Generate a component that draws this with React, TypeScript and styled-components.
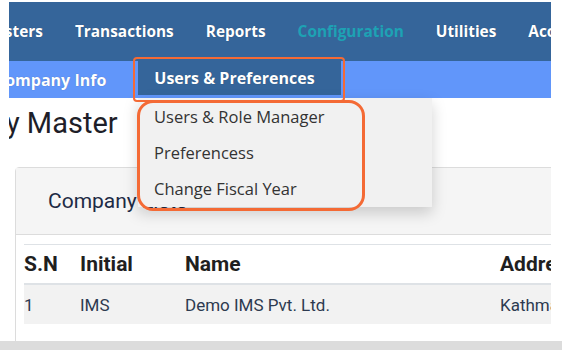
import styled, { createGlobalStyle } from 'styled-components';

const GlobalStyle = createGlobalStyle`
  html, body {
    margin: 0;
    padding: 0;
    background: #fff;
  }
  * {
    box-sizing: border-box;
  }
`;

const topMenu = ['Masters', 'Transactions', 'Reports', 'Configuration', 'Utilities', 'Accounts'];
const dropdownItems = ['Users & Role Manager', 'Preferencess', 'Change Fiscal Year'];

const rows = [{ sn: '1', initial: 'IMS', name: 'Demo IMS Pvt. Ltd.', address: 'Kathmandu' }];

export default function App() {
  return (
    <Frame>
      <GlobalStyle />
      <Shot>
        <TopNav>
          <TopList>
            {topMenu.map((item) => (
              <TopItem key={item} $active={item === 'Configuration'}>
                {item}
              </TopItem>
            ))}
          </TopList>
        </TopNav>
        <SubNav>
          <SubItem>Company Info</SubItem>
          <SubItem $active>Users &amp; Preferences</SubItem>
        </SubNav>

        <Content>
          <Title>Company Master</Title>
          <Card>
            <CardHeader>Company Lists</CardHeader>
            <CardBody>
              <Table>
                <HeadRow>
                  <HeadCell>S.N</HeadCell>
                  <HeadCell>Initial</HeadCell>
                  <HeadCell>Name</HeadCell>
                  <HeadCell>Address</HeadCell>
                </HeadRow>
                {rows.map((row) => (
                  <BodyRow key={row.sn}>
                    <Cell>{row.sn}</Cell>
                    <Cell>{row.initial}</Cell>
                    <Cell>{row.name}</Cell>
                    <Cell>{row.address}</Cell>
                  </BodyRow>
                ))}
              </Table>
            </CardBody>
          </Card>
        </Content>

        <Dropdown>
          {dropdownItems.map((item) => (
            <DropdownItem key={item}>{item}</DropdownItem>
          ))}
        </Dropdown>

        {/* annotation outlines drawn over the screenshot */}
        <TabOutline />
        <MenuOutline />
      </Shot>
      <BottomBar />
    </Frame>
  );
}

const Frame = styled.div`
  width: 562px;
  height: 350px;
  background: #fff;
  display: flex;
  flex-direction: column;
  overflow: hidden;
`;

const Shot = styled.div`
  position: relative;
  height: 339px;
  margin: 2px 11px 0 9px;
  overflow: hidden;
  background: #fff;
`;

const BottomBar = styled.div`
  height: 9px;
  background: #dcdcdc;
`;

const TopNav = styled.nav`
  height: 59px;
  background: #35659a;
  display: flex;
  align-items: center;
  overflow: hidden;
`;

const TopList = styled.div`
  display: flex;
  margin-left: -44px;
  white-space: nowrap;
`;

const TopItem = styled.span<{ $active?: boolean }>`
  padding: 0 16px;
  font-family: 'Open Sans', 'Noto Sans', sans-serif;
  font-weight: 700;
  font-size: 15.4px;
  color: ${({ $active }) => ($active ? '#1da2b4' : '#ffffff')};
  text-shadow: ${({ $active }) => ($active ? 'none' : '0 0 1px rgba(0, 0, 0, 0.35)')};
`;

const SubNav = styled.div`
  height: 37px;
  background: #6196fa;
  display: flex;
  gap: 16px;
  margin-left: -30px;
  white-space: nowrap;
`;

const SubItem = styled.span<{ $active?: boolean }>`
  display: flex;
  align-items: center;
  height: ${({ $active }) => ($active ? '34px' : '37px')};
  padding: ${({ $active }) => ($active ? '0 26px 0 16px' : '0 16px')};
  background: ${({ $active }) => ($active ? '#35659a' : 'transparent')};
  font-family: 'Open Sans', 'Noto Sans', sans-serif;
  font-weight: 700;
  font-size: 16px;
  color: #fff;
  text-shadow: 0 0 1px rgba(0, 0, 0, 0.3);
`;

const Content = styled.div`
  padding: 8px 0 0 6px;
`;

const Title = styled.h1`
  margin: 0 0 26px -118px;
  font-family: Roboto, 'Liberation Sans', sans-serif;
  font-weight: 400;
  font-size: 29px;
  line-height: 35px;
  color: #1e1e28;
  white-space: nowrap;
`;

const Card = styled.div`
  border: 1px solid #dcdcdc;
  border-radius: 4px;
  width: 600px;
  height: 200px;
  background: #fff;
`;

const CardHeader = styled.div`
  height: 67px;
  display: flex;
  align-items: center;
  padding-left: 32px;
  background: #f5f5f5;
  border-bottom: 1px solid #dcdcdc;
  font-family: Roboto, 'Liberation Sans', sans-serif;
  font-size: 21px;
  color: #1d2b45;
`;

const CardBody = styled.div`
  padding: 9px 0 0 8px;
`;

const Table = styled.div`
  border-top: 1px solid #dee2e6;
  font-family: Roboto, 'Liberation Sans', sans-serif;
`;

const HeadRow = styled.div`
  display: grid;
  grid-template-columns: 56px 105px 315px 1fr;
  height: 40px;
  align-items: center;
  border-bottom: 2px solid #dee2e6;
`;

const HeadCell = styled.div`
  font-weight: 700;
  font-size: 21px;
  color: #1f1f1f;
  white-space: nowrap;
`;

const BodyRow = styled.div`
  display: grid;
  grid-template-columns: 56px 105px 315px 1fr;
  height: 39px;
  align-items: center;
  background: #f2f2f2;
`;

const Cell = styled.div`
  font-size: 17px;
  color: #2d3a50;
  white-space: nowrap;
`;

const Dropdown = styled.div`
  position: absolute;
  left: 129px;
  top: 96px;
  width: 294px;
  height: 109px;
  background: #f1f1f1;
  box-shadow: 0 6px 14px rgba(0, 0, 0, 0.18);
  display: flex;
  flex-direction: column;
`;

const DropdownItem = styled.div`
  height: 37px;
  display: flex;
  align-items: center;
  padding-left: 16px;
  font-family: 'Open Sans', 'Noto Sans', sans-serif;
  font-size: 16.5px;
  color: #333;
  white-space: nowrap;
`;

const TabOutline = styled.div`
  position: absolute;
  left: 124px;
  top: 55px;
  width: 212px;
  height: 45px;
  border: 2px solid #f46a35;
  border-radius: 4px;
`;

const MenuOutline = styled.div`
  position: absolute;
  left: 128px;
  top: 98px;
  width: 228px;
  height: 111px;
  border: 3px solid #f46a35;
  border-radius: 16px;
`;
